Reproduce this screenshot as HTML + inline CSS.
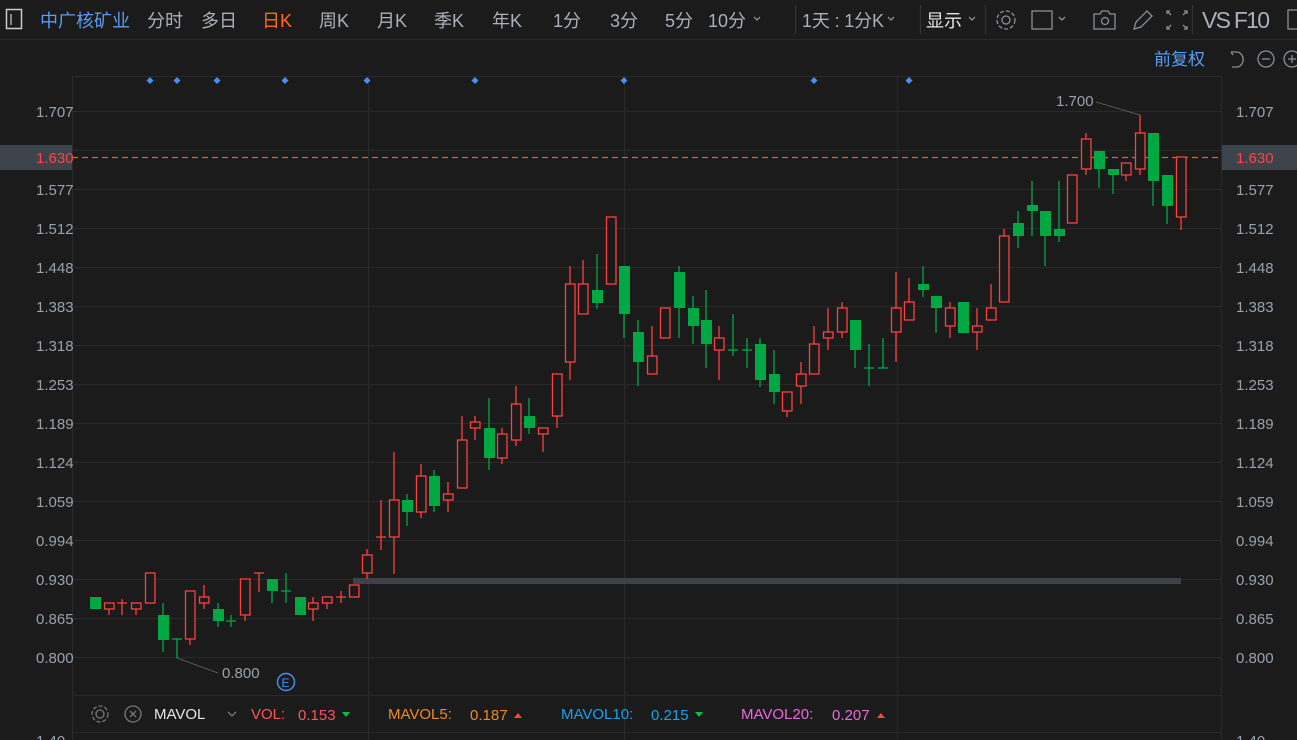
<!DOCTYPE html>
<html><head><meta charset="utf-8"><style>
body{margin:0;background:#1b1b1b;width:1297px;height:740px;overflow:hidden;font-family:"Liberation Sans","Noto Sans CJK SC",sans-serif;}
svg{display:block}
</style></head><body>
<svg width="1297" height="740" xmlns="http://www.w3.org/2000/svg" font-family="Liberation Sans, Noto Sans CJK SC, sans-serif">
<rect width="1297" height="740" fill="#1b1b1b"/>
<line x1="0" y1="39.5" x2="1297" y2="39.5" stroke="#2a2a2a"/>
<rect x="6.5" y="9.5" width="15" height="19" fill="none" stroke="#ccc" stroke-width="1.5"/>
<line x1="11" y1="14" x2="11" y2="25" stroke="#ccc" stroke-width="1.2"/>
<g font-size="18" fill="#a8b0ba">
<text x="40" y="27" fill="#5b9cf0">中广核矿业</text>
<text x="147" y="27">分时</text><text x="201" y="27">多日</text>
<text x="262" y="27" fill="#ff6a1a">日K</text>
<text x="319" y="27">周K</text><text x="377" y="27">月K</text><text x="434" y="27">季K</text><text x="492" y="27">年K</text>
<text x="553" y="27">1分</text><text x="610" y="27">3分</text><text x="665" y="27">5分</text><text x="708" y="27">10分</text>
<text x="802" y="27" textLength="82">1天 : 1分K</text>
<text x="926" y="27" fill="#e6e6e6">显示</text>
<text x="1202" y="28" font-size="23" textLength="68">VS F10</text>
</g>
<g fill="none" stroke="#8a9099" stroke-width="1.3">
<path d="M754 17l3 3 3-3M888 17l3 3 3-3M969 17l3 3 3-3M1059 17l3 3 3-3"/>
<line x1="795.5" y1="5" x2="795.5" y2="34" stroke="#333"/>
<line x1="920.5" y1="5" x2="920.5" y2="34" stroke="#333"/>
<line x1="985.5" y1="5" x2="985.5" y2="34" stroke="#333"/>
<line x1="1192.5" y1="5" x2="1192.5" y2="34" stroke="#333"/>
<circle cx="1006" cy="20" r="4"/><circle cx="1006" cy="20" r="9" stroke-dasharray="4 2"/>
<rect x="1032" y="11" width="20" height="18"/>
<path d="M1094 14h6l2-3h6l2 3h5v15h-21z"/><circle cx="1105" cy="21" r="3.5"/>
<path d="M1134 29l2-7 11-11 5 5-11 11z"/>
<path d="M1170 11h-3v3M1184 11h3v3M1170 29h-3v-3M1184 29h3v-3M1171 15l-3-3M1183 15l3-3M1171 25l-3 3M1183 25l3 3"/>
<rect x="1288" y="10" width="14" height="19"/>
</g>
<text x="1154" y="65" font-size="17" fill="#5b9cf0">前复权</text>
<g fill="none" stroke="#8a9099" stroke-width="1.3">
<path d="M1231 52h7a8 8 0 0 1 0 15h-6M1231 52l2 3"/>
<circle cx="1266" cy="59" r="8"/><path d="M1262 59h8"/>
<circle cx="1292" cy="59" r="8"/><path d="M1288 59h8M1292 55v8"/>
</g>
<g stroke="#2a2a2a" stroke-width="1">
<line x1="72" y1="76.5" x2="1221" y2="76.5"/>
<line x1="72.5" y1="76" x2="72.5" y2="740"/>
<line x1="1221.5" y1="76" x2="1221.5" y2="740"/>
<line x1="368.5" y1="76" x2="368.5" y2="740"/>
<line x1="624.5" y1="76" x2="624.5" y2="740"/>
<line x1="897.5" y1="76" x2="897.5" y2="740"/>
<line x1="72" y1="695.5" x2="1221" y2="695.5"/>
<line x1="72" y1="732.5" x2="1221" y2="732.5"/>
<line x1="72" y1="111.5" x2="1221" y2="111.5"/><line x1="72" y1="150.5" x2="1221" y2="150.5"/>
<line x1="72" y1="189.5" x2="1221" y2="189.5"/><line x1="72" y1="228.5" x2="1221" y2="228.5"/>
<line x1="72" y1="267.5" x2="1221" y2="267.5"/><line x1="72" y1="306.5" x2="1221" y2="306.5"/>
<line x1="72" y1="345.5" x2="1221" y2="345.5"/><line x1="72" y1="384.5" x2="1221" y2="384.5"/>
<line x1="72" y1="423.5" x2="1221" y2="423.5"/><line x1="72" y1="462.5" x2="1221" y2="462.5"/>
<line x1="72" y1="501.5" x2="1221" y2="501.5"/><line x1="72" y1="540.5" x2="1221" y2="540.5"/>
<line x1="72" y1="579.5" x2="1221" y2="579.5"/><line x1="72" y1="618.5" x2="1221" y2="618.5"/>
<line x1="72" y1="657.5" x2="1221" y2="657.5"/>
</g>
<rect x="0" y="145" width="72" height="25" fill="#3c434b"/>
<rect x="1222" y="145" width="75" height="25" fill="#3c434b"/>
<line x1="72" y1="157.5" x2="1221" y2="157.5" stroke="#d0682a" stroke-dasharray="6 4" stroke-width="1.2"/>
<g font-size="15" fill="#98a2ae">
<text x="36" y="117">1.707</text><text x="36" y="163" fill="#ff4444">1.630</text><text x="36" y="195">1.577</text><text x="36" y="234">1.512</text>
<text x="36" y="273">1.448</text><text x="36" y="312">1.383</text><text x="36" y="351">1.318</text><text x="36" y="390">1.253</text>
<text x="36" y="429">1.189</text><text x="36" y="468">1.124</text><text x="36" y="507">1.059</text><text x="36" y="546">0.994</text>
<text x="36" y="585">0.930</text><text x="36" y="624">0.865</text><text x="36" y="663">0.800</text>
<text x="1236" y="117">1.707</text><text x="1236" y="163" fill="#ff4444">1.630</text><text x="1236" y="195">1.577</text><text x="1236" y="234">1.512</text>
<text x="1236" y="273">1.448</text><text x="1236" y="312">1.383</text><text x="1236" y="351">1.318</text><text x="1236" y="390">1.253</text>
<text x="1236" y="429">1.189</text><text x="1236" y="468">1.124</text><text x="1236" y="507">1.059</text><text x="1236" y="546">0.994</text>
<text x="1236" y="585">0.930</text><text x="1236" y="624">0.865</text><text x="1236" y="663">0.800</text>
<text x="36" y="746">1.40</text><text x="1236" y="746">1.40</text>
<text x="1056" y="106">1.700</text><text x="222" y="678">0.800</text>
</g>
<path d="M1096 102L1140 115M177 658L218 673" stroke="#666" stroke-width="0.8" fill="none"/>
<g fill="#4a8ef0">
<path d="M150 77l3.5 3.5-3.5 3.5-3.5-3.5zM177 77l3.5 3.5-3.5 3.5-3.5-3.5zM217 77l3.5 3.5-3.5 3.5-3.5-3.5zM285 77l3.5 3.5-3.5 3.5-3.5-3.5zM367 77l3.5 3.5-3.5 3.5-3.5-3.5zM475 77l3.5 3.5-3.5 3.5-3.5-3.5zM624 77l3.5 3.5-3.5 3.5-3.5-3.5zM814 77l3.5 3.5-3.5 3.5-3.5-3.5zM909 77l3.5 3.5-3.5 3.5-3.5-3.5z"/>
</g>
<circle cx="286" cy="682" r="8.5" fill="none" stroke="#4a8ef0" stroke-width="1.5"/>
<text x="281.5" y="687" font-size="12" fill="#4a8ef0">E</text>
<rect x="353" y="578" width="828" height="6" fill="#3d4248"/>
<g id="candles"></g>
<g fill="none" stroke="#777" stroke-width="1.3">
<circle cx="100" cy="714" r="4"/><circle cx="100" cy="714" r="8" stroke-dasharray="4 2"/>
<circle cx="133" cy="714" r="8"/><path d="M130 711l6 6M136 711l-6 6"/>
<path d="M228 712l4 4 4-4"/>
</g>
<g font-size="15">
<text x="154" y="719" fill="#e6e6e6">MAVOL</text>
<text x="251" y="719" fill="#ff5555">VOL:</text><text x="298" y="720" fill="#ff5555">0.153</text>
<text x="388" y="719" fill="#f08a24">MAVOL5:</text><text x="470" y="720" fill="#f08a24">0.187</text>
<text x="561" y="719" fill="#1ca0e8">MAVOL10:</text><text x="651" y="720" fill="#1ca0e8">0.215</text>
<text x="741" y="719" fill="#e86ae0">MAVOL20:</text><text x="832" y="720" fill="#e86ae0">0.207</text>
</g>
<path d="M342 712h8l-4 5zM695 712h8l-4 5z" fill="#00c050"/>
<path d="M514 718h8l-4-5zM877 718h8l-4-5z" fill="#ff4444"/>
</svg>
<script>
var d=[
[95,597,609,597,609,'g'],[109,603,615,603,609,'r'],[122,599,615,603,603,'r'],[136,603,615,603,609,'r'],[150,573,603,573,603,'r'],
[163,603,652,615,640,'g'],[177,639,658,639,639,'g'],[190,591,645,591,639,'r'],[204,585,609,597,603,'r'],[218,603,627,609,621,'g'],
[231,615,627,621,621,'g'],[245,579,621,579,615,'r'],[259,573,592,573,573,'r'],[272,579,603,579,591,'g'],[286,573,603,591,591,'g'],
[300,597,615,597,615,'g'],[313,597,621,603,609,'r'],[327,597,609,597,603,'r'],[341,591,603,597,597,'r'],[354,585,597,585,597,'r'],
[367,549,579,555,573,'r'],[381,500,550,537,537,'r'],[394,452,574,500,537,'r'],[407,494,526,500,512,'g'],[421,464,518,476,512,'r'],
[434,470,512,476,506,'g'],[448,482,512,494,500,'r'],[462,416,488,440,488,'r'],[475,416,440,422,428,'r'],[489,398,470,428,458,'g'],
[502,428,464,434,458,'r'],[516,386,446,404,440,'r'],[529,398,434,416,428,'g'],[543,428,452,428,434,'r'],[557,374,428,374,416,'r'],
[570,266,380,284,362,'r'],[583,260,314,284,314,'r'],[597,254,309,290,303,'g'],[611,217,284,217,284,'r'],[624,266,338,266,314,'g'],
[638,320,386,332,362,'g'],[652,326,374,356,374,'r'],[665,308,338,308,338,'r'],[679,266,338,272,308,'g'],[693,296,344,308,326,'g'],
[706,290,368,320,344,'g'],[719,326,380,338,350,'r'],[733,314,356,350,350,'g'],[747,338,368,350,350,'g'],[760,338,387,344,380,'g'],
[774,350,404,374,392,'g'],[787,392,417,392,411,'r'],[801,362,404,374,386,'r'],[814,326,374,344,374,'r'],[828,308,350,332,338,'r'],
[842,302,338,308,332,'r'],[855,320,368,320,350,'g'],[869,344,386,368,368,'g'],[883,338,368,368,368,'g'],[896,272,362,308,332,'r'],
[909,278,320,302,320,'r'],[923,266,297,284,290,'g'],[936,296,333,296,308,'g'],[950,302,338,308,326,'r'],[963,302,333,302,333,'g'],
[977,308,350,326,332,'r'],[991,284,320,308,320,'r'],[1004,229,302,236,302,'r'],[1018,211,248,223,236,'g'],[1032,181,236,205,211,'g'],
[1045,211,266,211,236,'g'],[1059,181,242,229,236,'g'],[1072,175,223,175,223,'r'],[1086,133,175,139,169,'r'],[1099,151,188,151,169,'g'],
[1113,169,194,169,175,'g'],[1126,163,181,163,175,'r'],[1140,115,175,133,169,'r'],[1153,133,206,133,181,'g'],[1167,175,224,175,206,'g'],
[1181,157,230,157,217,'r']];
var s='';
d.forEach(function(c){var x=c[0],col=c[5]=='r'?'#ff4040':'#00a844';
s+='<line x1="'+x+'" y1="'+c[1]+'" x2="'+x+'" y2="'+c[2]+'" stroke="'+col+'" stroke-width="1.3"/>';
var h=c[4]-c[3];
if(h<1){s+='<line x1="'+(x-5)+'" y1="'+c[3]+'" x2="'+(x+5)+'" y2="'+c[3]+'" stroke="'+col+'" stroke-width="1.3"/>';}
else if(c[5]=='r'){s+='<rect x="'+(x-4.5)+'" y="'+c[3]+'" width="9.5" height="'+h+'" fill="#1b1b1b" stroke="'+col+'" stroke-width="1.3"/>';}
else{s+='<rect x="'+(x-5)+'" y="'+c[3]+'" width="11" height="'+h+'" fill="'+col+'"/>';}
});
document.getElementById('candles').innerHTML=s;
</script>
</body></html>
